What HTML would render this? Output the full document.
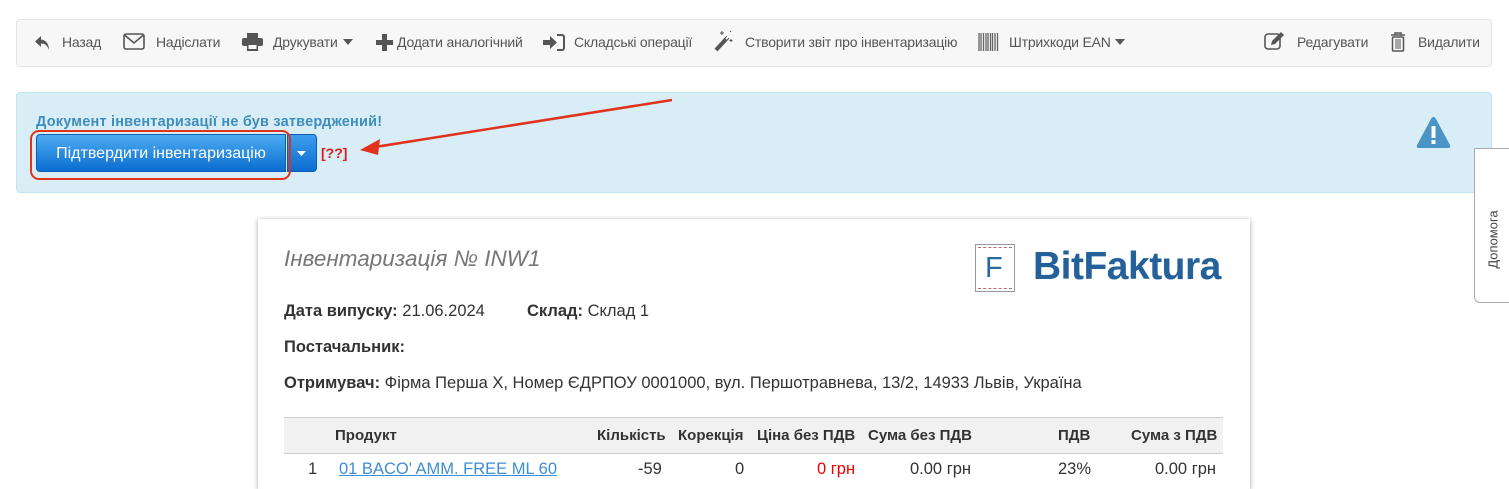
<!DOCTYPE html>
<html><head><meta charset="utf-8"><style>
*{margin:0;padding:0;box-sizing:border-box}
body{width:1509px;height:474px;overflow:hidden;background:#fff;font-family:"Liberation Sans",sans-serif;position:relative}
.a{position:absolute;white-space:nowrap}
.tb{left:16px;top:19px;width:1476px;height:48px;background:#f7f7f7;border:1px solid #e3e3e3;border-radius:4px}
.t{font-size:14px;color:#555;top:34px;letter-spacing:-0.2px}
.ic{top:33px}
.alert{left:16px;top:92px;width:1476px;height:101px;background:#d9edf7;border:1px solid #bce8f1;border-radius:4px}
.paper{left:258px;top:219px;width:992px;height:270px;background:#fff;box-shadow:0 1px 5px rgba(0,0,0,.35)}
.l{font-size:16.5px;color:#333}
.th{font-size:15px;font-weight:bold;color:#333;top:427px}
.td{font-size:16.5px;color:#333;top:460px}
</style></head><body>
<div class="a tb"></div>
<svg class="a ic" style="left:34px;top:35px" width="18" height="16" viewBox="0 0 18 16"><path d="M7 1 L1 6.5 L7 12 V8.5 C11 8.5 13 10 15 15 C15 9 12 5 7 4.5Z" fill="#555"/></svg>
<span class="a t" style="left:62px">Назад</span>
<svg class="a ic" style="left:123px" width="22" height="17" viewBox="0 0 22 17"><rect x="1" y="1" width="20" height="15" rx="2" fill="none" stroke="#555" stroke-width="1.6"/><path d="M1.5 2 L11 10 L20.5 2" fill="none" stroke="#555" stroke-width="1.6"/></svg>
<span class="a t" style="left:156px">Надіслати</span>
<svg class="a ic" style="left:242px" width="21" height="18" viewBox="0 0 21 18"><rect x="5" y="0" width="11" height="5" fill="#555"/><rect x="0" y="5" width="21" height="8" rx="2" fill="#555"/><rect x="5" y="11" width="11" height="7" fill="#555"/><rect x="6.5" y="12" width="8" height="4" fill="#f7f7f7"/></svg>
<span class="a t" style="left:273px">Друкувати</span>
<svg class="a" style="left:343px;top:39px" width="10" height="6"><path d="M0 0H10L5 6Z" fill="#555"/></svg>
<svg class="a ic" style="left:376px;top:34px" width="17" height="17"><path d="M6 0h5v6h6v5h-6v6H6v-6H0V6h6z" fill="#555"/></svg>
<span class="a t" style="left:397px">Додати аналогічний</span>
<svg class="a ic" style="left:543px;top:34px" width="22" height="17" viewBox="0 0 22 17"><path d="M0 6h7V2l7 6.5L7 15v-4H0z" fill="#555"/><path d="M14 1h5a2 2 0 0 1 2 2v11a2 2 0 0 1-2 2h-5" fill="none" stroke="#555" stroke-width="2"/></svg>
<span class="a t" style="left:574px">Складські операції</span>
<svg class="a ic" style="left:713px;top:30px" width="22" height="22" viewBox="0 0 22 22"><path d="M3 20 L15 7" stroke="#555" stroke-width="4"/><path d="M13 9 L16 6" stroke="#fff" stroke-width="2"/><path d="M9 1v4M7 3h4M18 9v3M16.5 10.5h3M17 1l1 1" stroke="#555" stroke-width="1"/></svg>
<span class="a t" style="left:745px">Створити звіт про інвентаризацію</span>
<svg class="a ic" style="left:978px;top:33px" width="22" height="18"><path d="M1 0v18M3 0v18M5.5 0v18M8 0v18M10 0v18M12.5 0v18M14.5 0v18M17 0v18M19.5 0v18" stroke="#666" stroke-width="1.3"/></svg>
<span class="a t" style="left:1009px">Штрихкоди EAN</span>
<svg class="a" style="left:1115px;top:39px" width="10" height="6"><path d="M0 0H10L5 6Z" fill="#555"/></svg>
<svg class="a ic" style="left:1264px;top:31px" width="22" height="20" viewBox="0 0 22 20"><rect x="1" y="3" width="15" height="15" rx="3" fill="none" stroke="#555" stroke-width="1.6"/><path d="M7 14l1-4 9-9 3 3-9 9z" fill="#555"/></svg>
<span class="a t" style="left:1297px">Редагувати</span>
<svg class="a ic" style="left:1390px;top:32px" width="16" height="20" viewBox="0 0 16 20"><path d="M1 3h14M5 3V1h6v2" fill="none" stroke="#555" stroke-width="1.5"/><rect x="2.5" y="5" width="11" height="14" rx="1" fill="none" stroke="#555" stroke-width="1.5"/><path d="M6 7v10M8 7v10M10 7v10" stroke="#555" stroke-width="1"/></svg>
<span class="a t" style="left:1418px">Видалити</span>

<div class="a alert"></div>
<span class="a" style="left:36px;top:114px;font-size:14.5px;font-weight:bold;color:#3d8dbd;letter-spacing:0.2px">Документ інвентаризації не був затверджений!</span>
<div class="a" style="left:36px;top:134px;width:250px;height:38px;background:linear-gradient(#4eacf2,#0a6dd0);border-radius:4px 0 0 4px;border:1px solid #0a5fb5;color:#fff;font-size:16px;text-align:center;line-height:37px">Підтвердити інвентаризацію</div>
<div class="a" style="left:287px;top:134px;width:30px;height:38px;background:linear-gradient(#3d9ded,#0a6dd0);border-radius:0 4px 4px 0;border:1px solid #0a5fb5"></div>
<svg class="a" style="left:297px;top:151px" width="9" height="5"><path d="M0 0H9L4.5 5Z" fill="#fff"/></svg>
<div class="a" style="left:30px;top:130px;width:261px;height:50px;border:2px solid #e0321c;border-radius:9px"></div>
<span class="a" style="left:321px;top:145px;font-size:14px;font-weight:bold;color:#e01b1b">[??]</span>
<svg class="a" style="left:0;top:0" width="1509" height="474"><path d="M672 100 L375 147" stroke="#e0321c" stroke-width="2.5"/><path d="M360 150 L380 139 L378 155Z" fill="#e0321c"/></svg>
<svg class="a" style="left:1416px;top:116px" width="35" height="33" viewBox="0 0 35 33"><path d="M17.5 1 Q19 1 20 3 L34 29 Q35 32 32 32 H3 Q0 32 1 29 L15 3 Q16 1 17.5 1Z" fill="#4a94c6"/><rect x="15.5" y="10" width="4" height="12" fill="#fff"/><rect x="15.5" y="24" width="4" height="4" fill="#fff"/></svg>
<div class="a" style="left:1474px;top:148px;width:40px;height:155px;background:#fff;border:1px solid #aaa;border-radius:0 0 0 6px"></div>
<span class="a" style="left:1458px;top:232px;font-size:13px;color:#444;transform:rotate(-90deg);width:70px;text-align:center">Допомога</span>

<div class="a paper"></div>
<span class="a" style="left:284px;top:246px;font-size:22.5px;font-style:italic;color:#777">Інвентаризація № INW1</span>
<div class="a" style="left:975px;top:244px;width:40px;height:48px;border:1px solid #999;background:#fff"></div>
<div class="a" style="left:978px;top:247px;width:34px;height:0;border-top:1px dashed #c66"></div>
<div class="a" style="left:978px;top:288px;width:34px;height:0;border-top:1px dashed #c66"></div>
<span class="a" style="left:985px;top:252px;font-size:29px;color:#2a6aa0">F</span>
<span class="a" style="left:1033px;top:245px;font-size:39px;font-weight:bold;color:#24609a;letter-spacing:-0.5px">BitFaktura</span>
<span class="a l" style="left:284px;top:302px"><b>Дата випуску:</b> 21.06.2024</span>
<span class="a l" style="left:527px;top:302px"><b>Склад:</b> Склад 1</span>
<span class="a l" style="left:284px;top:338px"><b>Постачальник:</b></span>
<span class="a l" style="left:284px;top:374px"><b>Отримувач:</b> Фірма Перша Х, Номер ЄДРПОУ 0001000, вул. Першотравнева, 13/2, 14933 Львів, Україна</span>
<div class="a" style="left:284px;top:417px;width:939px;height:37px;background:#f1f1f1;border-top:1px solid #ccc;border-bottom:1px solid #ccc"></div>
<span class="a th" style="left:335px">Продукт</span>
<span class="a th" style="left:597px">Кількість</span>
<span class="a th" style="left:678px">Корекція</span>
<span class="a th" style="left:757px">Ціна без ПДВ</span>
<span class="a th" style="left:868px">Сума без ПДВ</span>
<span class="a th" style="left:1058px">ПДВ</span>
<span class="a th" style="left:1131px">Сума з ПДВ</span>
<span class="a td" style="left:308px">1</span>
<span class="a td" style="left:339px;color:#3c8dd6;text-decoration:underline">01 BACO' AMM. FREE ML 60</span>
<span class="a td" style="left:638px">-59</span>
<span class="a td" style="left:735px">0</span>
<span class="a td" style="left:817px;color:#e00">0 грн</span>
<span class="a td" style="left:910px">0.00 грн</span>
<span class="a td" style="left:1058px">23%</span>
<span class="a td" style="left:1155px">0.00 грн</span>
</body></html>
